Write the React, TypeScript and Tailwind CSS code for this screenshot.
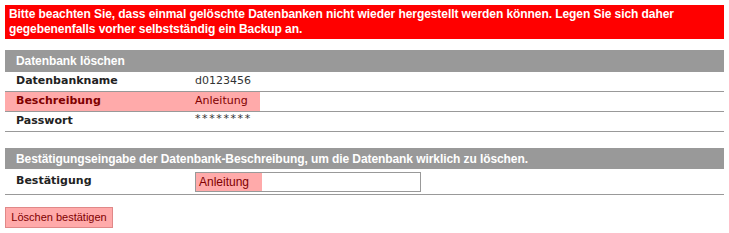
import React from "react";

const labelCls =
  "w-[190px] shrink-0 pl-[11px] font-bold text-[11px] font-['DejaVu_Sans',Verdana,sans-serif]";
const valueCls = "text-[11px] font-['DejaVu_Sans',Verdana,sans-serif]";

function Row({ label, value, highlight, masked }: { label: string; value: string; highlight?: boolean; masked?: boolean }) {
  return (
    <div className="flex h-[20px] items-stretch border-b border-[#999999]">
      <div className={`flex items-center ${highlight ? "bg-[#ffaaaa] text-[#800000]" : "text-[#222222]"}`}>
        <div className={labelCls}>{label}</div>
        <div
          className={`${valueCls} pr-[12px] ${highlight ? "text-[#800000]" : "text-[#333333]"} ${
            masked ? "tracking-[1.6px] -translate-y-[2px]" : ""
          }`}
        >
          {value}
        </div>
      </div>
    </div>
  );
}

export default function App() {
  return (
    <div className="w-[729px] h-[233px] bg-white p-[5px] font-['Liberation_Sans',Arial,sans-serif]">
      {/* warning banner */}
      <div className="bg-[#ff0000] px-[4px] py-[2px] text-[12px] leading-[15px] font-bold text-white tracking-[-0.07px]">
        Bitte beachten Sie, dass einmal gelöschte Datenbanken nicht wieder hergestellt werden können. Legen Sie sich daher
        gegebenenfalls vorher selbstständig ein Backup an.
      </div>

      {/* delete section */}
      <div className="mt-[11px]">
        <div className="flex h-[22px] items-center bg-[#999999] pl-[11px] text-[12px] font-bold text-white tracking-[-0.08px]">
          Datenbank löschen
        </div>
        <Row label="Datenbankname" value="d0123456" />
        <Row label="Beschreibung" value="Anleitung" highlight />
        <Row label="Passwort" value="********" masked />
      </div>

      {/* confirmation section */}
      <div className="mt-[16px]">
        <div className="flex h-[21px] items-center bg-[#999999] pl-[11px] text-[12px] font-bold text-white tracking-[-0.08px]">
          Bestätigungseingabe der Datenbank-Beschreibung, um die Datenbank wirklich zu löschen.
        </div>
        <div className="flex h-[26px] items-center border-b border-[#999999]">
          <div className={`${labelCls} text-[#222222] self-start pt-[4px]`}>Bestätigung</div>
          <div className="flex h-[20px] w-[226px] border border-[#999999] bg-white">
            <span className="flex items-center bg-[#ffaaaa] pl-[3px] pr-[13px] text-[12px] text-[#800000]">
              Anleitung
            </span>
          </div>
        </div>
      </div>

      <button className="mt-[12px] h-[21px] w-[108px] border border-[#e08888] bg-[#ffaaaa] text-[11px] text-[#800000] font-['Liberation_Sans',Arial,sans-serif]">
        Löschen bestätigen
      </button>
    </div>
  );
}
